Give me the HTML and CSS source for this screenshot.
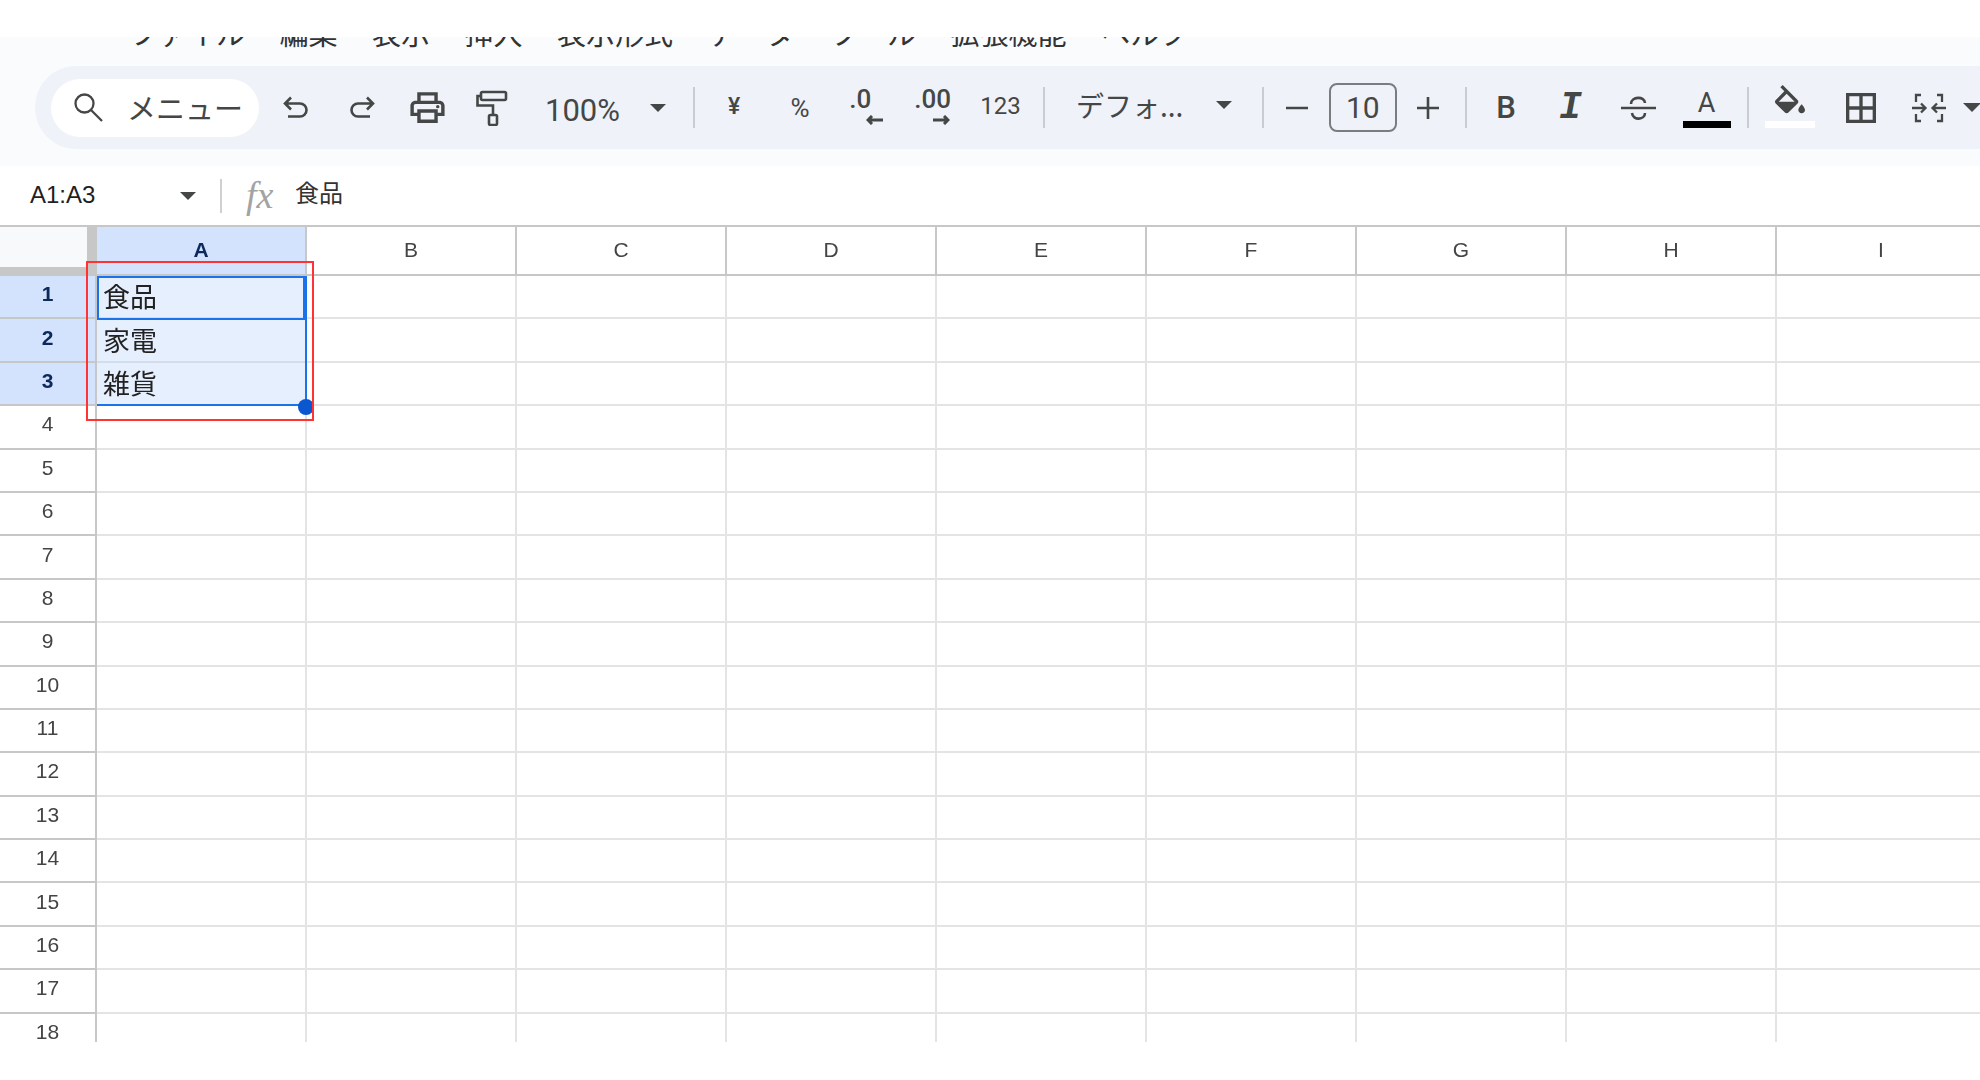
FILE: index.html
```html
<!DOCTYPE html>
<html lang="ja">
<head>
<meta charset="utf-8">
<title>Sheet</title>
<link rel="stylesheet" href="styles.css">
</head>
<body>
<div class="app">
  <div class="top-blank"></div>
  <header class="band">
    <nav class="menu">
      <span>ファイル</span><span>編集</span><span>表示</span><span>挿入</span><span>表示形式</span><span>データ</span><span>ツール</span><span>拡張機能</span><span>ヘルプ</span>
    </nav>
    <div class="toolbar">
      <div class="search">
        <svg class="ic-search line thin" width="30" height="29" viewBox="0 0 30 29"><circle cx="10.500" cy="10.500" r="9"/><path d="M17 17l11 11"/></svg>
        <span>メニュー</span>
      </div>
      <div class="tool first"><svg class="line" width="26" height="23" viewBox="0 0 26 23"><path d="M8 1.500L2 7.500l6 6M2 7.500h15a6.500 6.500 0 0 1 0 13H5"/></svg></div>
      <div class="tool"><svg class="line" width="26" height="23" viewBox="0 0 26 23"><path d="M18 1.500l6 6-6 6M24 7.500H9a6.500 6.500 0 0 0 0 13h12"/></svg></div>
      <div class="tool"><svg class="solid" width="41" height="41" viewBox="0 0 24 24"><path d="M19 8h-1V3H6v5H5c-1.660 0-3 1.340-3 3v6h4v4h12v-4h4v-6c0-1.660-1.340-3-3-3zM8 5h8v3H8V5zm8 12v2H8v-4h8v2zm2-2v-2H6v2H4v-4c0-.55.45-1 1-1h14c.55 0 1 .45 1 1v4h-2z"/><circle cx="18" cy="11.500" r="1"/></svg></div>
      <div class="tool"><svg class="line roller" width="32" height="36" viewBox="0 0 32 36"><rect x="5" y="2" width="25" height="8" rx="1.500"/><path d="M5 6H1.500v9.500H17V25"/><rect x="13" y="25" width="8" height="10" rx="1.500"/></svg></div>
      <div class="drop drop-zoom"><span>100%</span><i class="caret"></i></div>
      <div class="sep"></div>
      <div class="tool fmt-first"><span class="t-yen">¥</span></div>
      <div class="tool"><span class="t-pct">%</span></div>
      <div class="tool stack"><span class="t-dec t-dec-one">.0</span><svg class="arrow arrow-l" width="17" height="10" viewBox="0 0 17 10"><path d="M6 1L2 5l4 4M2 5h15"/></svg></div>
      <div class="tool stack"><span class="t-dec">.00</span><svg class="arrow arrow-r" width="17" height="10" viewBox="0 0 17 10"><path d="M11 1l4 4-4 4M15 5H0"/></svg></div>
      <div class="tool"><span class="t-123">123</span></div>
      <div class="sep sep-font"></div>
      <div class="drop drop-font"><span>デフォ...</span><i class="caret"></i></div>
      <div class="sep"></div>
      <div class="tool step-minus"><svg class="line" width="22" height="4" viewBox="0 0 22 4"><path d="M0 2h22"/></svg></div>
      <div class="size-box">10</div>
      <div class="tool step-plus"><svg class="line" width="22" height="22" viewBox="0 0 22 22"><path d="M0 11h22M11 0v22"/></svg></div>
      <div class="sep sep-style"></div>
      <div class="tool m6"><span class="t-b">B</span></div>
      <div class="tool"><span class="t-i">I</span></div>
      <div class="tool"><svg class="line" width="35" height="26" viewBox="0 0 35 26"><path d="M0 13h35M10 9c0-8 14-8 14-1M11 18c1 8 13 7 13 0"/></svg></div>
      <div class="tool color m2"><span class="t-a">A</span><b class="bar bar-black"></b></div>
      <div class="sep sep-color"></div>
      <div class="tool color fill m8"><svg class="solid" width="40" height="30" viewBox="0 0 24 18"><path d="M16.560 8.940L7.620 0 6.210 1.410l2.380 2.380-5.150 5.150c-.59.59-.59 1.540 0 2.120l5.500 5.500c.29.29.68.44 1.060.44s.77-.15 1.060-.44l5.500-5.500c.59-.58.59-1.530 0-2.120zM5.210 10L10 5.210 14.790 10H5.210zM19 11.500s-2 2.170-2 3.500c0 1.100.9 2 2 2s2-.9 2-2c0-1.330-2-3.500-2-3.500z"/></svg><b class="bar bar-white"></b></div>
      <div class="tool m5"><svg class="solid" width="40" height="40" viewBox="0 0 24 24"><path d="M3 3v18h18V3H3zm8 16H5v-6h6v6zm0-8H5V5h6v6zm8 8h-6v-6h6v6zm0-8h-6V5h6v6z"/></svg></div>
      <div class="tool m3"><svg class="line thin" width="34" height="30" viewBox="0 0 34 30"><path d="M9 2H4v7M4 21v7h5M25 2h5v7M30 21v7h-5M0 15h13M9 10.500l4.500 4.500L9 19.500M34 15H21M25 10.500L20.500 15l4.500 4.500"/></svg></div>
      <i class="caret caret-end"></i>
    </div>
  </header>

  <div class="fbar">
    <div class="namebox"><span>A1:A3</span><i class="caret caret-name"></i></div>
    <div class="fsep"></div>
    <span class="fx">fx</span>
    <span class="fval">食品</span>
  </div>

  <main class="sheet">
    <div class="row head">
      <div class="corner"></div>
      <div class="col sel">A</div><div class="col">B</div><div class="col">C</div><div class="col">D</div><div class="col">E</div><div class="col">F</div><div class="col">G</div><div class="col">H</div><div class="col">I</div>
    </div>
    <div class="row"><div class="rh sel">1</div><div class="c sel">食品</div><div class="c"></div><div class="c"></div><div class="c"></div><div class="c"></div><div class="c"></div><div class="c"></div><div class="c"></div><div class="c"></div></div>
    <div class="row"><div class="rh sel">2</div><div class="c sel">家電</div><div class="c"></div><div class="c"></div><div class="c"></div><div class="c"></div><div class="c"></div><div class="c"></div><div class="c"></div><div class="c"></div></div>
    <div class="row"><div class="rh sel">3</div><div class="c sel">雑貨</div><div class="c"></div><div class="c"></div><div class="c"></div><div class="c"></div><div class="c"></div><div class="c"></div><div class="c"></div><div class="c"></div></div>
    <div class="row"><div class="rh">4</div><div class="c"></div><div class="c"></div><div class="c"></div><div class="c"></div><div class="c"></div><div class="c"></div><div class="c"></div><div class="c"></div><div class="c"></div></div>
    <div class="row"><div class="rh">5</div><div class="c"></div><div class="c"></div><div class="c"></div><div class="c"></div><div class="c"></div><div class="c"></div><div class="c"></div><div class="c"></div><div class="c"></div></div>
    <div class="row"><div class="rh">6</div><div class="c"></div><div class="c"></div><div class="c"></div><div class="c"></div><div class="c"></div><div class="c"></div><div class="c"></div><div class="c"></div><div class="c"></div></div>
    <div class="row"><div class="rh">7</div><div class="c"></div><div class="c"></div><div class="c"></div><div class="c"></div><div class="c"></div><div class="c"></div><div class="c"></div><div class="c"></div><div class="c"></div></div>
    <div class="row"><div class="rh">8</div><div class="c"></div><div class="c"></div><div class="c"></div><div class="c"></div><div class="c"></div><div class="c"></div><div class="c"></div><div class="c"></div><div class="c"></div></div>
    <div class="row"><div class="rh">9</div><div class="c"></div><div class="c"></div><div class="c"></div><div class="c"></div><div class="c"></div><div class="c"></div><div class="c"></div><div class="c"></div><div class="c"></div></div>
    <div class="row"><div class="rh">10</div><div class="c"></div><div class="c"></div><div class="c"></div><div class="c"></div><div class="c"></div><div class="c"></div><div class="c"></div><div class="c"></div><div class="c"></div></div>
    <div class="row"><div class="rh">11</div><div class="c"></div><div class="c"></div><div class="c"></div><div class="c"></div><div class="c"></div><div class="c"></div><div class="c"></div><div class="c"></div><div class="c"></div></div>
    <div class="row"><div class="rh">12</div><div class="c"></div><div class="c"></div><div class="c"></div><div class="c"></div><div class="c"></div><div class="c"></div><div class="c"></div><div class="c"></div><div class="c"></div></div>
    <div class="row"><div class="rh">13</div><div class="c"></div><div class="c"></div><div class="c"></div><div class="c"></div><div class="c"></div><div class="c"></div><div class="c"></div><div class="c"></div><div class="c"></div></div>
    <div class="row"><div class="rh">14</div><div class="c"></div><div class="c"></div><div class="c"></div><div class="c"></div><div class="c"></div><div class="c"></div><div class="c"></div><div class="c"></div><div class="c"></div></div>
    <div class="row"><div class="rh">15</div><div class="c"></div><div class="c"></div><div class="c"></div><div class="c"></div><div class="c"></div><div class="c"></div><div class="c"></div><div class="c"></div><div class="c"></div></div>
    <div class="row"><div class="rh">16</div><div class="c"></div><div class="c"></div><div class="c"></div><div class="c"></div><div class="c"></div><div class="c"></div><div class="c"></div><div class="c"></div><div class="c"></div></div>
    <div class="row"><div class="rh">17</div><div class="c"></div><div class="c"></div><div class="c"></div><div class="c"></div><div class="c"></div><div class="c"></div><div class="c"></div><div class="c"></div><div class="c"></div></div>
    <div class="row"><div class="rh">18</div><div class="c"></div><div class="c"></div><div class="c"></div><div class="c"></div><div class="c"></div><div class="c"></div><div class="c"></div><div class="c"></div><div class="c"></div></div>

    <div class="range-outline"></div>
    <div class="active-outline"></div>
    <div class="handle"></div>
    <div class="annotation"></div>
  </main>
</div>
</body>
</html>
```
FILE: styles.css
```css
* { box-sizing: border-box; }
html, body { margin: 0; padding: 0; background: #fff; }
body {
  width: 1980px;
  height: 1080px;
  overflow: hidden;
  font-family: "Liberation Sans", "Noto Sans CJK JP", sans-serif;
  color: #444746;
}
.app { width: 1980px; height: 1080px; overflow: hidden; filter: blur(0.6px); }
.top-blank { height: 37px; background: #fff; }

/* header band */
.band { height: 129px; background: #f9fbfd; }
.menu {
  height: 29px;
  overflow: hidden;
  display: flex;
  gap: 34.5px;
  padding-left: 129px;
}
.menu span {
  margin-top: -25px;
  height: 40px;
  font: 29px/40px "Noto Sans CJK JP", sans-serif;
  color: #333;
  white-space: nowrap;
}

/* toolbar */
.toolbar {
  margin-left: 35px;
  width: 1945px;
  height: 83px;
  padding-left: 16px;
  display: flex;
  align-items: center;
  overflow: hidden;
  background: #eff2f8;
  border-radius: 41px 0 0 41px;
}
.search {
  flex: none;
  width: 208px;
  height: 58px;
  border-radius: 29px;
  background: #fff;
  display: flex;
  align-items: center;
  padding-left: 23px;
}
.search span {
  margin-left: 23px;
  font: 29px/1 "Noto Sans CJK JP", sans-serif;
  color: #444746;
  white-space: nowrap;
}
.ic-search { flex: none; }
.tool {
  flex: none;
  width: 66px;
  height: 83px;
  display: flex;
  align-items: center;
  justify-content: center;
}
.tool.first { margin-left: 3.5px; }
.fmt-first { margin-left: 6px; }
.tool.stack { position: relative; width: 66.500px; }
.m2 { margin-left: 2.5px; }
.m3 { margin-left: 2px; }
.m5 { margin-left: 5px; }
.m6 { margin-left: 6px; }
.m8 { margin-left: 8px; }
.solid { fill: #444746; flex: none; }
.line { fill: none; stroke: #444746; stroke-width: 2.6; flex: none; }
.line.thin { stroke-width: 2.3; }
.roller { margin-left: -3px; }
.sep { flex: none; width: 2px; height: 41px; background: #c9ccd1; }
.sep-font { margin-left: 11px; }
.sep-style { margin-left: 6px; }
.sep-color { margin-left: 7px; }
.caret {
  display: block;
  flex: none;
  width: 0;
  height: 0;
  border-left: 8px solid transparent;
  border-right: 8px solid transparent;
  border-top: 8px solid #444746;
}
.drop {
  flex: none;
  height: 83px;
  display: flex;
  align-items: center;
  justify-content: space-between;
  white-space: nowrap;
}
.drop-zoom {
  width: 166.500px;
  padding: 5px 27px 0 18.500px;
  font: 31px/1 Roboto, sans-serif;
}
.drop-zoom .caret { margin-top: -5px; }
.drop-font {
  width: 217px;
  padding: 0 30px 0 31px;
  font: 28px/1 "Noto Sans CJK JP", sans-serif;
}
.drop-font .caret { margin-top: -5px; }
.drop-font span { margin-top: -6px; }
.t-yen { font: 500 23px/1 Roboto, sans-serif; margin-top: -2px; }
.t-pct { font: 26px/1 Roboto, sans-serif; }
.t-123 { font: 24px/1 Roboto, sans-serif; margin-top: -4px; margin-left: 3px; }
.t-dec { font: 500 26px/1 Roboto, sans-serif; margin-top: -17px; }
.t-dec-one { margin-left: -12px; }
.arrow { position: absolute; top: 49px; fill: none; stroke: #444746; stroke-width: 3; }
.arrow-l { left: 33px; }
.arrow-r { left: 33px; }
.step-minus { width: 64.500px; padding-left: 2px; }
.step-plus { width: 62px; }
.size-box {
  flex: none;
  width: 68.500px;
  height: 49px;
  border: 2px solid #7a7d80;
  border-radius: 8px;
  display: flex;
  align-items: center;
  justify-content: center;
  font: 30px/1 Roboto, sans-serif;
}
.t-b { font: 500 31px/1 Roboto, sans-serif; }
.t-i { font: italic 700 38px/1 "Liberation Mono", monospace; margin-left: -3px; }
.t-a { display: block; height: 30px; font: 27px/30px Roboto, sans-serif; }
.tool.color {
  flex-direction: column;
  justify-content: flex-start;
  padding-top: 22px;
}
.tool.color.fill { padding-top: 19px; }
.bar { display: block; flex: none; width: 48px; height: 7px; margin-top: 3px; }
.bar-black { background: #000; }
.bar-white { width: 50px; margin-top: 6px; background: #fff; }
.caret-end { margin-left: 1px; border-left-width: 9px; border-right-width: 9px; border-top-width: 9px; }

/* formula bar */
.fbar {
  height: 59px;
  display: flex;
  align-items: center;
  background: #fff;
}
.namebox {
  flex: none;
  width: 220px;
  padding: 0 24px 2px 30px;
  display: flex;
  align-items: center;
  justify-content: space-between;
  font-size: 24px;
  color: #1f1f1f;
}
.caret-name { margin-top: 2px; }
.fsep { flex: none; width: 2px; height: 34px; background: #d0d0d0; }
.fx {
  flex: none;
  width: 50px;
  margin-left: 24px;
  margin-top: -2px;
  font: italic 38px/1 "Liberation Serif", serif;
  color: #a3a3a3;
}
.fval { font: 24px/1 "Noto Sans CJK JP", sans-serif; color: #333; margin-top: -7px; margin-left: -1px; }

/* sheet */
.sheet {
  position: relative;
  height: 817px;
  overflow: hidden;
}
.row { display: flex; height: 43.400px; }
.row.head { height: 51px; border-top: 2px solid #c7c7c7; }
.corner {
  flex: none;
  width: 97px;
  background: #f8f9fa;
  border-right: 10px solid #c7c7c7;
  border-bottom: 9px solid #c7c7c7;
}
.col {
  flex: none;
  width: 210px;
  display: flex;
  align-items: center;
  justify-content: center;
  padding-bottom: 1px;
  font-size: 21px;
  color: #444;
  border-right: 2px solid #c7c7c7;
  border-bottom: 2px solid #c7c7c7;
}
.col.sel { background: #d3e3fd; color: #0b2a5b; font-weight: 700; }
.rh {
  flex: none;
  width: 97px;
  display: flex;
  align-items: center;
  justify-content: center;
  padding-bottom: 5px;
  font-size: 21px;
  color: #444;
  border-right: 2px solid #c7c7c7;
  border-bottom: 2px solid #c7c7c7;
}
.rh.sel { background: #d3e3fd; color: #0b2a5b; font-weight: 700; }
.c {
  flex: none;
  width: 210px;
  display: flex;
  align-items: center;
  padding: 0 0 2px 6px;
  font: 27px/1 "Noto Sans CJK JP", sans-serif;
  color: #222;
  border-right: 2px solid #e4e4e4;
  border-bottom: 2px solid #e4e4e4;
}
.c.sel { background: #e6effd; border-bottom-color: #d3dcea; }

/* overlays over the cells */
.range-outline {
  position: absolute;
  left: 97px;
  top: 51px;
  width: 210px;
  height: 130px;
  border-right: 2px solid #1a73e8;
  border-bottom: 2px solid #1a73e8;
}
.active-outline {
  position: absolute;
  left: 97px;
  top: 51px;
  width: 210px;
  height: 44px;
  border: 2.500px solid #1a73e8;
  border-right-width: 4px;
}
.handle {
  position: absolute;
  left: 298px;
  top: 174px;
  width: 16px;
  height: 16px;
  border-radius: 50%;
  background: #0b57d0;
}
.annotation {
  position: absolute;
  left: 86px;
  top: 36px;
  width: 228px;
  height: 160px;
  border: 2px solid #f33;
}
```
